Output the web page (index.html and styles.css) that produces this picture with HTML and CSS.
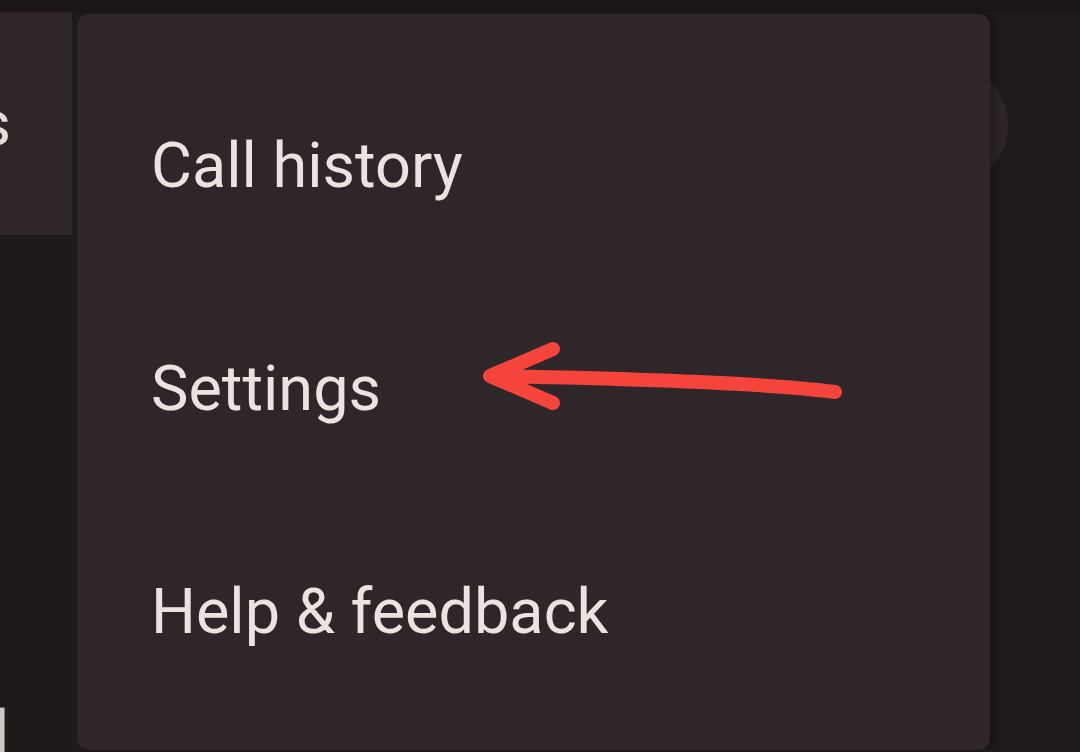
FILE: index.html
```html
<!DOCTYPE html>
<html>
<head>
<meta charset="utf-8">
<link rel="stylesheet" href="styles.css">
</head>
<body>
<div class="app">
  <div class="topbar"></div>
  <div class="content">
    <div class="side">
      <div class="tab"><span class="tab-label">Contacts</span></div>
      <div class="side-rest"><span class="side-glyph">l</span></div>
    </div>
    <div class="main">
      <div class="avatar"></div>
    </div>
  </div>
  <div class="menu">
    <div class="menu-item">Call history</div>
    <div class="menu-item">Settings</div>
    <div class="menu-item">Help &amp; feedback</div>
  </div>
  <svg class="annot" width="1080" height="752" viewBox="0 0 1080 752">
    <path d="M835 392 C 790 386, 700 380, 490 376 M553 349 L490 376 L553 403" fill="none" stroke="#f4443b" stroke-width="14" stroke-linecap="round" stroke-linejoin="round"/>
  </svg>
</div>
</body>
</html>
```
FILE: styles.css
```css
html, body {
  margin: 0;
  padding: 0;
}
body {
  width: 1080px;
  height: 752px;
  overflow: hidden;
  background: #201b1b;
  font-family: Roboto, "Noto Sans", sans-serif;
}
.app {
  position: relative;
  width: 1080px;
  height: 752px;
  overflow: hidden;
  display: flex;
  flex-direction: column;
}
.topbar {
  height: 12px;
  background: #1b1617;
  flex: none;
}
.content {
  flex: 1;
  display: flex;
  min-height: 0;
}
.side {
  width: 72px;
  display: flex;
  flex-direction: column;
}
.tab {
  height: 223px;
  flex: none;
  background: #2d2526;
  position: relative;
  overflow: hidden;
}
.tab-label {
  position: absolute;
  right: 61px;
  top: 75px;
  font-size: 63px;
  color: #e6dcda;
  white-space: nowrap;
}
.side-rest {
  flex: 1;
  background: #1f1a1a;
  position: relative;
  overflow: hidden;
}
.side-glyph {
  position: absolute;
  left: -6px;
  top: 462px;
  font-size: 63px;
  color: #cfc6c4;
}
.main {
  flex: 1;
  background: #201b1b;
  position: relative;
}
.avatar {
  position: absolute;
  left: 810px;
  top: 50px;
  width: 126px;
  height: 126px;
  border-radius: 50%;
  background: #2e2627;
}
.menu {
  position: absolute;
  left: 77px;
  top: 14px;
  bottom: 2px;
  width: 913px;
  background: #2e2628;
  border-radius: 12px;
  box-shadow: 6px 0 10px rgba(0,0,0,0.25);
  display: flex;
  flex-direction: column;
  padding-top: 120px;
  box-sizing: border-box;
  overflow: hidden;
}
.menu-item {
  height: 223px;
  flex: none;
  padding-left: 74px;
  font-size: 63px;
  line-height: 1;
  color: #ece2e0;
}
.annot {
  position: absolute;
  left: 0;
  top: 0;
}
```
